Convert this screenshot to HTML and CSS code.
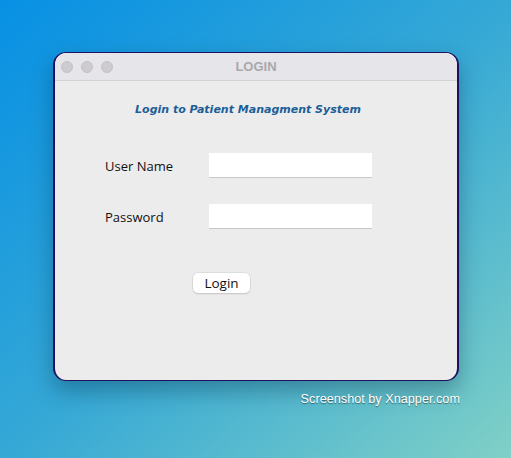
FILE: index.html
```html
<!DOCTYPE html>
<html>
<head>
<meta charset="utf-8">
<link rel="stylesheet" href="styles.css">
</head>
<body>
<div class="stage">
  <div class="window">
    <div class="titlebar">
      <div class="lights">
        <span class="light"></span>
        <span class="light"></span>
        <span class="light"></span>
      </div>
      <div class="title">LOGIN</div>
    </div>
    <div class="content">
      <h1 class="heading">Login to Patient Managment System</h1>
      <div class="form">
        <div class="row">
          <label class="label">User Name</label>
          <div class="input"></div>
        </div>
        <div class="row">
          <label class="label">Password</label>
          <div class="input"></div>
        </div>
      </div>
      <div class="actions">
        <button class="btn">Login</button>
      </div>
    </div>
  </div>
  <div class="credit">Screenshot by Xnapper.com</div>
</div>
</body>
</html>
```
FILE: styles.css
```css
html, body {
  margin: 0;
  padding: 0;
  width: 511px;
  height: 458px;
  overflow: hidden;
}
body {
  background: linear-gradient(to bottom right, #0790e4 0%, #35a8d6 50%, #80d0c6 100%);
  font-family: "Open Sans", "DejaVu Sans", sans-serif;
}
.stage {
  padding: 52px 0 0 53px;
  width: 407px;
}
.window {
  width: 402px;
  height: 327px;
  border-style: solid;
  border-color: #1e1160;
  border-width: 1px 2px 1px 2px;
  border-radius: 13px;
  background: #ececec;
  overflow: hidden;
  box-shadow: 0 10px 22px rgba(0, 40, 60, 0.35);
}
.titlebar {
  position: relative;
  height: 27px;
  background: #e6e5e9;
  border-bottom: 1px solid #d3d2d6;
  display: flex;
  align-items: center;
  justify-content: center;
}
.lights {
  position: absolute;
  left: 6px;
  top: 8px;
  display: flex;
  gap: 8px;
}
.light {
  width: 12px;
  height: 12px;
  box-sizing: border-box;
  border-radius: 50%;
  background: #cdcbcf;
  border: 0.5px solid #c2c0c4;
}
.title {
  font-family: "Liberation Sans", Arial, sans-serif;
  font-weight: bold;
  font-size: 13px;
  color: #a9a8ab;
}
.content {
  padding-top: 22px;
}
.heading {
  margin: 0;
  text-align: center;
  font-family: "DejaVu Sans", sans-serif;
  font-style: italic;
  font-weight: bold;
  font-size: 11px;
  color: #1b5e98;
  padding-right: 16px;
}
.form {
  margin-top: 37px;
  padding-left: 50px;
  display: flex;
  flex-direction: column;
  gap: 26px;
}
.row {
  display: flex;
  align-items: center;
}
.label {
  width: 104px;
  font-size: 13px;
  color: #111;
}
.input {
  width: 163px;
  height: 24px;
  background: #fff;
  border-bottom: 1px solid #c8c8c8;
}
.actions {
  margin-top: 42px;
  padding-left: 138px;
}
.btn {
  width: 57px;
  height: 20px;
  padding: 0;
  background: #fff;
  border: none;
  border-radius: 5px;
  box-shadow: 0 0 0 0.5px #cfcfcf, 0 1px 1.5px rgba(0,0,0,0.2);
  font-family: "Open Sans", "DejaVu Sans", sans-serif;
  font-size: 13.5px;
  color: #111;
  line-height: 20px;
}
.credit {
  margin-top: 11px;
  text-align: right;
  width: 407px;
  font-family: "Liberation Sans", Arial, sans-serif;
  font-size: 12.7px;
  color: #fff;
  text-shadow: 0 1px 1px rgba(0,0,0,0.45);
}
```
